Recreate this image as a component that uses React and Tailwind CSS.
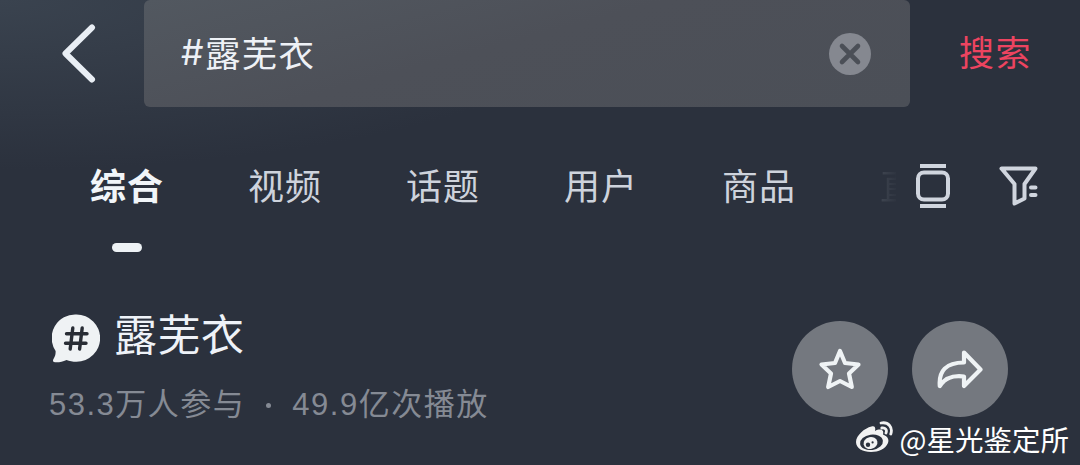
const tabs = [
  { key: 'video', label: '视频' },
  { key: 'topic', label: '话题' },
  { key: 'user', label: '用户' },
  { key: 'goods', label: '商品' },
];

const BackIcon = () => (
  <svg width="36" height="60" viewBox="0 0 36 60" fill="none" stroke="#e9eef4" strokeWidth="6" strokeLinecap="round" strokeLinejoin="round">
    <path d="M32 3.500 L5.500 29.500 L32 55.500" />
  </svg>
);

const ClearIcon = () => (
  <svg width="42" height="42" viewBox="0 0 42 42" fill="none">
    <circle cx="21" cy="21" r="21" fill="#858890" />
    <path d="M13 13 L29 29 M29 13 L13 29" stroke="#4b4f57" strokeWidth="4.600" strokeLinecap="round" />
  </svg>
);

const LayoutIcon = () => (
  <svg width="34" height="46" viewBox="0 0 34 46" fill="none" stroke="#d0d5de" strokeWidth="4">
    <path d="M4 3 H30 M4 43 H30" />
    <rect x="2" y="9.500" width="30" height="27" rx="6" />
  </svg>
);

const FilterIcon = () => (
  <svg width="40" height="40" viewBox="0 0 40 40" fill="none" stroke="#d0d5de" strokeWidth="4" strokeLinejoin="round" strokeLinecap="round">
    <path d="M2.500 2.500 H36.500 L25.500 18 V32.500 L15.500 37.500 V18 Z" />
    <path d="M32 21.500 H36.500 M32 29 H36.500" />
  </svg>
);

const TopicIcon = () => (
  <svg width="48" height="49" viewBox="0 0 48 49" fill="none">
    <path
      d="M24.500 0.500 A23.500 23.500 0 0 1 24.500 47.800 C20.500 47.800 17.500 47 14.500 46 C10.500 48 7 48.500 3 48.300 C1 48.200 0.500 46.500 1.500 45 C3 42.500 3.800 40.500 3.600 37 A23.500 23.500 0 0 1 24.500 0.500 Z"
      fill="#eff2f4"
    />
    <path d="M20.800 14 L18.200 35 M30.200 14 L27.600 35 M14.500 19.800 H35 M13.500 29.200 H34" stroke="#292d35" strokeWidth="3.400" strokeLinecap="round" />
  </svg>
);

const StarIcon = () => (
  <svg width="44" height="44" viewBox="0 0 44 44" fill="none" stroke="#eff3f5" strokeWidth="4.200" strokeLinejoin="round">
    <path d="M22 4 L27 16 L40.500 17.500 L31 26.500 L33.800 40 L22 34 L10.200 40 L13 26.500 L3.500 17.500 L17 16 Z" />
  </svg>
);

const ShareIcon = () => (
  <svg width="46" height="40" viewBox="0 0 46 40" fill="none" stroke="#eff3f5" strokeWidth="4.200" strokeLinejoin="round">
    <path d="M27 3.500 L43.500 20.500 L27 37 V27.500 C15 26 8 29 2.800 37 C1.500 22 9 13.500 27 13.500 Z" />
  </svg>
);

const WeiboIcon = () => (
  <svg width="38" height="32" viewBox="0 0 38 32" fill="none">
    <path
      d="M15.500 5.500 C18.500 4.500 20 6.500 19 10 C23.500 7.500 28.500 8 27 13.500 C31 15 33.500 18 32 22 C29.500 28 22.500 31 15 31 C7 31 0 27.500 0 21 C0 14.500 8.500 7 15.500 5.500 Z"
      fill="#f2f2f2"
    />
    <ellipse cx="15.500" cy="21.300" rx="11.500" ry="7.700" transform="rotate(-8 15.500 21.300)" fill="#2b313d" />
    <ellipse cx="14.500" cy="22" rx="7" ry="6" transform="rotate(-12 14.500 22)" fill="#f2f2f2" />
    <circle cx="12" cy="23.700" r="2.200" fill="#2b313d" />
    <circle cx="16.600" cy="21.400" r="1.100" fill="#2b313d" />
    <path d="M25 2 C32.500 0.500 37 6.500 34.800 13 M25.800 7 C29.500 6.500 31.200 8.800 30 12" stroke="#f2f2f2" strokeWidth="2.800" strokeLinecap="round" />
  </svg>
);

const RoundButton = ({ label, children }) => (
  <button aria-label={label} className="flex h-24 w-24 items-center justify-center rounded-full bg-[#74787f]">
    {children}
  </button>
);

export default function App() {
  return (
    <div className="relative h-[465px] w-[1080px] overflow-hidden bg-[#2b313d] bg-[radial-gradient(ellipse_620px_170px_at_0_0,#3a434f,#2b313d)] font-['Liberation_Sans','Noto_Sans_CJK_SC',sans-serif]">
      <header className="flex h-[107px] items-center">
        <button aria-label="返回" className="ml-[60px] w-9">
          <BackIcon />
        </button>
        <div className="ml-12 flex h-full w-[766px] items-center justify-between rounded-md bg-[linear-gradient(165deg,#525860,#4d5058_45%,#4b4f57)] pr-[39px] pl-[37px]">
          <span className="flex items-center pb-1 font-['Noto_Sans_CJK_SC',sans-serif] text-[35.500px] leading-none tracking-[1.300px] text-[#eef1f6]">
            <span className="w-6 pt-0.5 font-['Inter',sans-serif]">#</span>
            露芜衣
          </span>
          <ClearIcon />
        </div>
        <span className="ml-[49px] text-[35px] leading-none tracking-[1.500px] whitespace-nowrap text-[#ed4460]">搜索</span>
      </header>

      <nav className="flex pt-[63px] pl-[90px] text-[36px] leading-[36px] tracking-[1px] text-[#ced3dc]">
        <div className="flex w-[158px] flex-col">
          <span className="font-bold text-[#f1f5f9]">综合</span>
          <span className="mt-[37px] ml-[22px] h-[9px] w-[30px] rounded-full bg-[#eef2f5]" />
        </div>
        {tabs.map((tab) => (
          <span key={tab.key} className="w-[158px]">
            {tab.label}
          </span>
        ))}
        <span className="w-4 overflow-hidden whitespace-nowrap bg-gradient-to-r from-[#404651] to-[#2e3440] bg-clip-text text-transparent">
          直
        </span>
        <div className="-mt-[7px] ml-5 flex items-start">
          <LayoutIcon />
          <span className="mt-[3px] ml-[49px]">
            <FilterIcon />
          </span>
        </div>
      </nav>

      <section className="flex pt-[62px] pr-[72px] pl-[49px]">
        <div className="flex-1">
          <div className="flex">
            <span className="ml-[3px]">
              <TopicIcon />
            </span>
            <h1 className="ml-[14px] text-[43px] leading-[44px] tracking-[0.500px] text-[#eef2f8]">露芜衣</h1>
          </div>
          <p className="mt-[25px] flex items-center text-[31px] leading-[34px] tracking-[1.500px] text-[#858a94]">
            <span>53.3万人参与</span>
            <span className="ml-[21px] h-[5px] w-[5px] rounded-full bg-[#858a94]" />
            <span className="ml-[21px]">49.9亿次播放</span>
          </p>
        </div>
        <div className="mt-[7px] flex gap-6">
          <RoundButton label="收藏">
            <StarIcon />
          </RoundButton>
          <RoundButton label="分享">
            <ShareIcon />
          </RoundButton>
        </div>
      </section>

      {/* Watermark */}
      <div className="absolute right-[11px] bottom-2 flex items-center text-white">
        <span className="mb-1">
          <WeiboIcon />
        </span>
        <span className="ml-[6px] font-['Noto_Sans_CJK_SC',sans-serif] text-[28.500px] leading-[34px]">@星光鉴定所</span>
      </div>
    </div>
  );
}
